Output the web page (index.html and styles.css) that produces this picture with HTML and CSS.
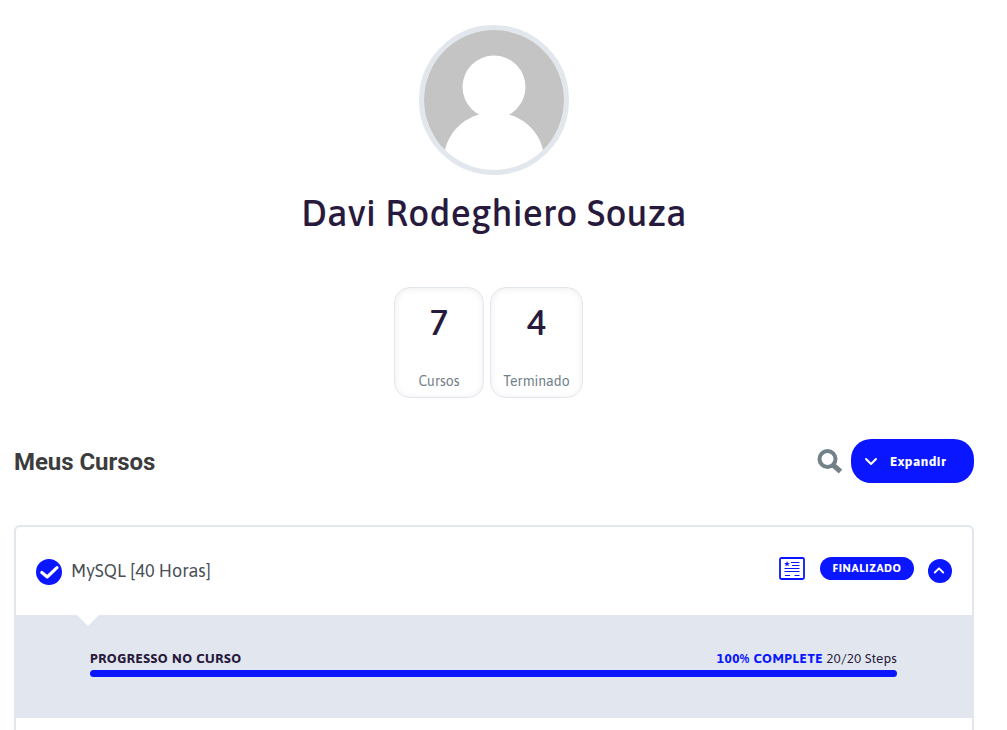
FILE: index.html
```html
<!DOCTYPE html>
<html lang="pt-BR">
<head>
<meta charset="utf-8">
<title>Meus Cursos</title>
<link rel="stylesheet" href="styles.css">
</head>
<body>
<main class="profile">
  <section class="profile-head">
    <svg class="avatar" viewBox="0 0 140 140" aria-hidden="true">
      <rect width="140" height="140" fill="#c4c4c4"/>
      <circle cx="70" cy="57" r="31.5" fill="#fff"/>
      <path d="M55 84.500C39 89 25 102 21 120V140H119V120C115 102 101 89 85 84.500Z" fill="#fff"/>
    </svg>
    <h1 class="name">Davi Rodeghiero Souza</h1>
    <div class="stats">
      <div class="stat"><strong class="stat-value">7</strong><span class="stat-label">Cursos</span></div>
      <div class="stat stat-wide"><strong class="stat-value">4</strong><span class="stat-label">Terminado</span></div>
    </div>
  </section>
  <section>
    <header class="section-head">
      <h2 class="section-title">Meus Cursos</h2>
      <svg class="search" viewBox="0 0 25 25" fill="none" stroke="#728188"><circle cx="10.500" cy="10" r="8" stroke-width="4"/><path d="M16 16l7.500 6.500" stroke-width="5"/></svg>
      <button class="expand"><svg width="14" height="9" viewBox="0 0 14 9" fill="none" stroke="#fff" stroke-width="2" stroke-linecap="round" stroke-linejoin="round"><path d="M2 2l5 5 5-5"/></svg><span class="expand-label">Expandir</span></button>
    </header>
    <article class="course">
      <div class="course-row">
        <svg class="check" viewBox="0 0 26 26"><circle cx="13" cy="13" r="13" fill="#0916ff"/><path d="M5.800 13.500l5.500 4.400L21 8.600" fill="none" stroke="#fff" stroke-width="3.200" stroke-linecap="round" stroke-linejoin="round"/></svg>
        <span class="course-title">MySQL [40 Horas]</span>
        <svg class="certificate" viewBox="0 0 26 23" fill="none" stroke="#0916ff"><rect x="1" y="1" width="24" height="21" rx="1.500" stroke-width="1.800"/><path d="M12 5.500h8.500M13 8.500h7.500M5.500 11.500h15M5.500 14.500h15M6 18.500h5M15.500 18.500h5" stroke-width="1.200"/><path d="M8 4l.8 1.900 2 .1-1.500 1.300.5 2L8 8.200l-1.800 1.100.5-2L5.200 6l2-.1z" fill="#0916ff" stroke="none"/></svg>
        <span class="status">FINALIZADO</span>
        <svg class="toggle" viewBox="0 0 24 24"><circle cx="12" cy="12" r="12" fill="#0916ff"/><path d="M6.800 13.500l4.200-4.200 4.200 4.200" fill="none" stroke="#fff" stroke-width="1.900" stroke-linecap="round" stroke-linejoin="round"/></svg>
      </div>
      <div class="progress">
        <div class="progress-text">
          <b class="progress-title">PROGRESSO NO CURSO</b>
          <b class="progress-percent">100% COMPLETE</b>
          <span class="progress-steps">20/20 Steps</span>
        </div>
        <div class="bar"><div class="bar-fill" style="width:100%"></div></div>
      </div>
    </article>
  </section>
</main>
</body>
</html>
```
FILE: styles.css
```css
* { box-sizing: border-box; }
body { margin: 0; background: #fff; color: #281a3d; font-family: "Asap", "Noto Sans", sans-serif; overflow: hidden; }
h1, h2 { margin: 0; }
svg { display: block; flex: none; }
.profile { height: 730px; padding: 25px 33px 0 14px; overflow: hidden; }
.profile-head { display: flex; flex-direction: column; align-items: center; }
.avatar { width: 150px; height: 150px; border: 5px solid #e2e7ed; border-radius: 50%; }
.name { margin-top: 13px; height: 50px; line-height: 50px; font-size: 37px; font-weight: 500; white-space: nowrap; letter-spacing: .3px; }
.stats { display: flex; gap: 6px; margin: 49px 11px 0 0; }
.stat { display: flex; flex-direction: column; align-items: center; width: 90px; height: 111px; padding-top: 14px; border: 1px solid #e2e7ed; border-radius: 16px; box-shadow: inset 0 1px 7px rgba(0, 0, 0, .07); }
.stat-wide { width: 93px; }
.stat-value { height: 40px; line-height: 40px; font-size: 36px; font-weight: 500; }
.stat-label { margin-top: 29px; line-height: 20px; font-size: 14px; color: #728188; }
.section-head { display: flex; align-items: center; height: 44px; margin-top: 41px; }
.section-title { flex: 1; padding-top: 2px; font: 700 24px/44px Roboto, sans-serif; letter-spacing: -.05px; color: #3c3c3c; }
.search { width: 25px; height: 25px; margin-right: 9px; }
.expand { display: flex; align-items: center; width: 123px; height: 44px; padding: 0 0 0 13px; border: 0; border-radius: 20px; background: #0916ff; color: #fff; font: 700 13.500px/20px "Asap", "Noto Sans", sans-serif; }
.expand-label { margin-left: 12px; letter-spacing: .45px; }
.course { height: 240px; margin-top: 42px; border: 2px solid #e2e7ed; border-radius: 6px; }
.course-row { display: flex; align-items: center; height: 88px; padding: 0 20px; }
.check { width: 26px; height: 26px; margin-top: 2px; }
.course-title { flex: 1; margin-left: 9px; padding-bottom: 2px; font-size: 18px; color: #495057; white-space: nowrap; }
.certificate { width: 26px; height: 23px; margin: 0 15px 5px 0; }
.status { width: 94px; height: 23px; margin: 0 14px 5px 0; border-radius: 12px; background: #0916ff; color: #fff; text-align: center; font-size: 11.500px; line-height: 21px; font-weight: 700; letter-spacing: .6px; }
.toggle { width: 24px; height: 24px; }
.progress { position: relative; height: 103px; padding: 33px 75px 0 74px; background: #e2e6ee; }
.progress::before { content: ""; position: absolute; top: 0; left: 61px; border: 11px solid transparent; border-top-color: #fff; border-bottom: 0; }
.progress-text { display: flex; height: 22px; line-height: 20px; font-size: 13.500px; white-space: nowrap; }
.progress-title { margin-right: auto; letter-spacing: .5px; }
.progress-percent { margin-right: 3px; color: #0916ff; letter-spacing: .5px; }
.progress-steps { letter-spacing: .1px; }
.bar { height: 7px; border-radius: 4px; }
.bar-fill { height: 100%; border-radius: 4px; background: #0916ff; }
```
